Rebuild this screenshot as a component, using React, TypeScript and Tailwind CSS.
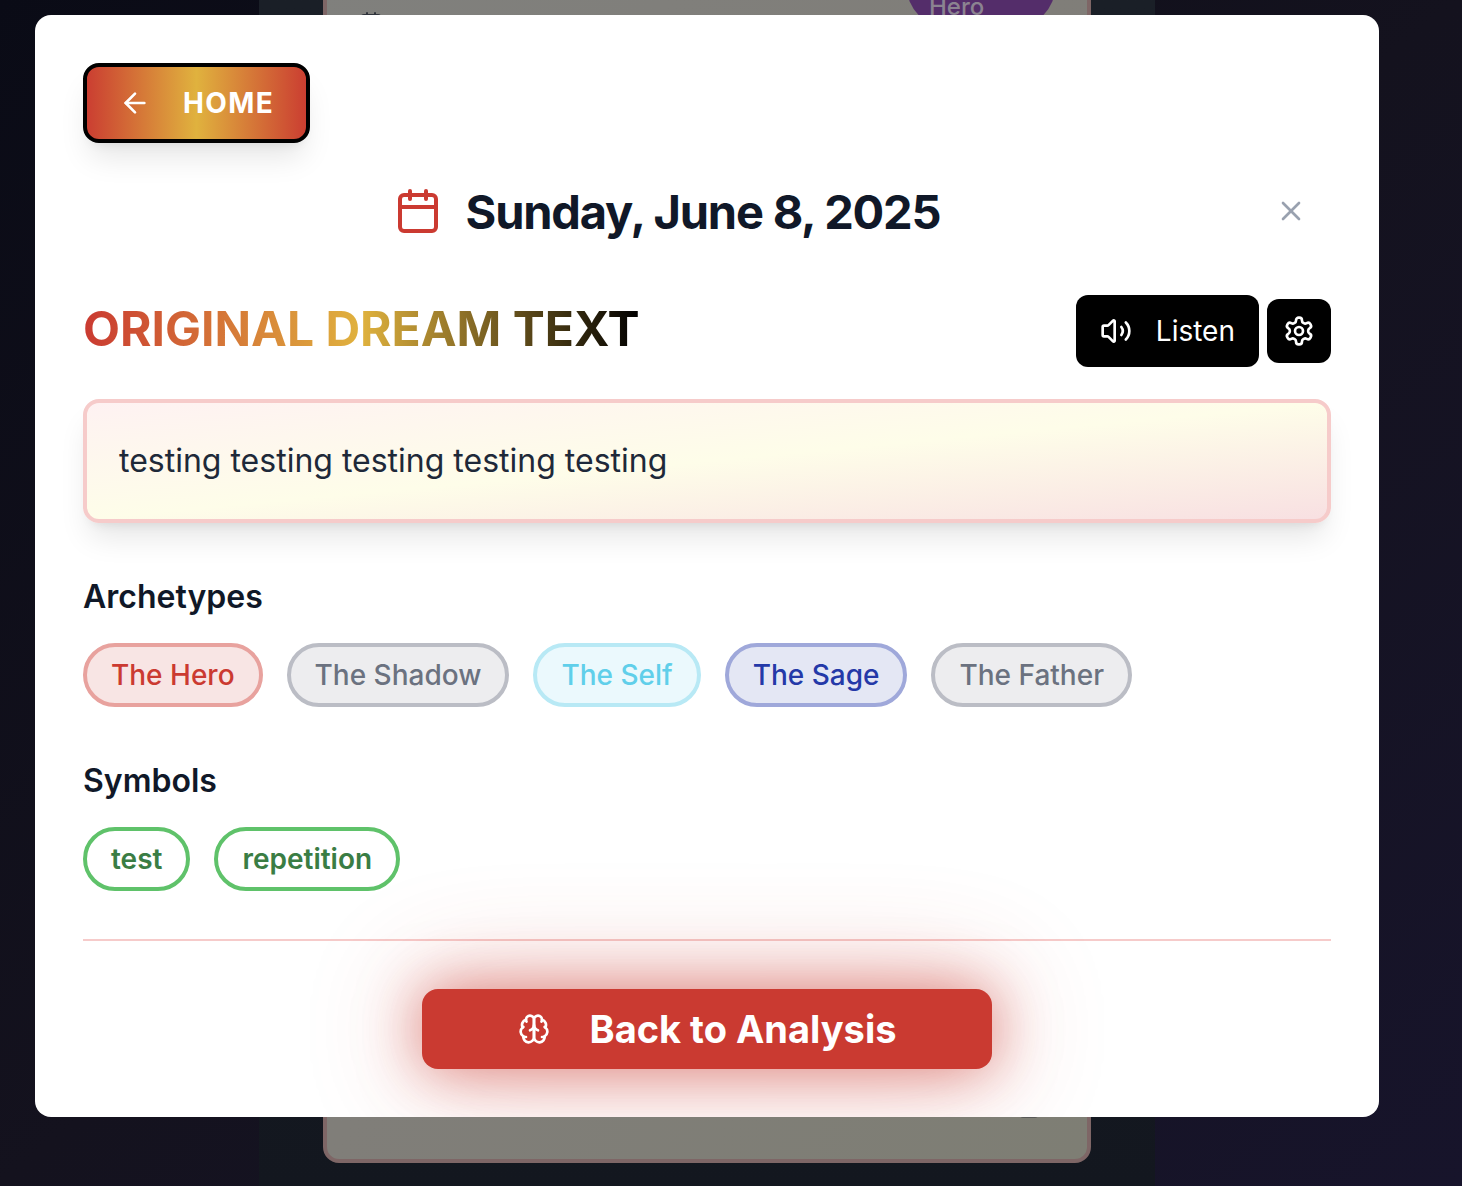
import React from "react";
import { ArrowLeft, Calendar, Trash2, Volume2, X } from "lucide-react";

const archetypes = [
  { name: "The Hero", style: "border-[#e8a29e] bg-[#f8e5e4] text-[#cb3a31]" },
  { name: "The Shadow", style: "border-[#bbbdc5] bg-[#ededef] text-[#6b7280]" },
  { name: "The Self", style: "border-[#b8e9f5] bg-[#ebf9fd] text-[#60cfea]" },
  { name: "The Sage", style: "border-[#9fa8da] bg-[#e4e7f4] text-[#2439a8]" },
  { name: "The Father", style: "border-[#bbbdc5] bg-[#ededef] text-[#6b7280]" },
];

const symbols = ["test", "repetition"];

function Icon({ children }: { children: React.ReactNode }) {
  return (
    <svg
      aria-hidden="true"
      width="32"
      height="32"
      viewBox="0 0 24 24"
      fill="none"
      stroke="currentColor"
      strokeWidth="2"
      strokeLinecap="round"
      strokeLinejoin="round"
    >
      {children}
    </svg>
  );
}

function BrainIcon() {
  return (
    <Icon>
      <path d="M12 5a3 3 0 1 0-5.997.125 4 4 0 0 0-2.526 5.77 4 4 0 0 0 .556 6.588A4 4 0 1 0 12 18Z" />
      <path d="M12 5a3 3 0 1 1 5.997.125 4 4 0 0 1 2.526 5.77 4 4 0 0 1-.556 6.588A4 4 0 1 1 12 18Z" />
      <path d="M15 13a4.5 4.5 0 0 1-3-4 4.5 4.5 0 0 1-3 4" />
      <path d="M17.599 6.5a3 3 0 0 0 .399-1.375" />
      <path d="M6.003 5.125A3 3 0 0 0 6.401 6.5" />
      <path d="M3.477 10.896a4 4 0 0 1 .585-.396" />
      <path d="M19.938 10.5a4 4 0 0 1 .585.396" />
      <path d="M6 18a4 4 0 0 1-1.967-.516" />
      <path d="M19.967 17.484A4 4 0 0 1 18 18" />
    </Icon>
  );
}

function GearIcon() {
  return (
    <Icon>
      <path d="M12.22 2h-.44a2 2 0 0 0-2 2v.18a2 2 0 0 1-1 1.73l-.43.25a2 2 0 0 1-2 0l-.15-.08a2 2 0 0 0-2.73.73l-.22.38a2 2 0 0 0 .73 2.73l.15.1a2 2 0 0 1 1 1.72v.51a2 2 0 0 1-1 1.74l-.15.09a2 2 0 0 0-.73 2.73l.22.38a2 2 0 0 0 2.73.73l.15-.08a2 2 0 0 1 2 0l.43.25a2 2 0 0 1 1 1.73V20a2 2 0 0 0 2 2h.44a2 2 0 0 0 2-2v-.18a2 2 0 0 1 1-1.73l.43-.25a2 2 0 0 1 2 0l.15.08a2 2 0 0 0 2.73-.73l.22-.39a2 2 0 0 0-.73-2.73l-.15-.08a2 2 0 0 1-1-1.74v-.5a2 2 0 0 1 1-1.74l.15-.09a2 2 0 0 0 .73-2.73l-.22-.38a2 2 0 0 0-2.73-.73l-.15.08a2 2 0 0 1-2 0l-.43-.25a2 2 0 0 1-1-1.73V4a2 2 0 0 0-2-2z" />
      <circle cx="12" cy="12" r="3" />
    </Icon>
  );
}

function Pill({ children, className }: { children: React.ReactNode; className: string }) {
  return (
    <li className={`flex h-16 items-center rounded-full border-4 px-6 text-[28px] leading-10 ${className}`}>
      {children}
    </li>
  );
}

function Backdrop() {
  return (
    <div aria-hidden="true" className="absolute inset-0 flex justify-center overflow-hidden bg-linear-to-br from-[#0a0b16] via-[#14121e] to-[#17142b] pr-12">
      <div className="flex w-full max-w-[896px] flex-col bg-linear-to-b from-[#1a1f27] to-[#13171f] px-16 pb-[23px]">
        <div className="-mt-16 flex flex-1 flex-col justify-between rounded-2xl border-4 border-[#7e6666] bg-linear-to-br from-[#80807d] via-[#807e79] to-[#7e7e74] px-8 pb-10">
          <div className="flex items-end justify-between">
            <Calendar size={24} className="-mb-2 text-[#30343c]" />
            <span className="flex h-[87px] w-[148px] items-end rounded-[40px] bg-[#542d6a] px-[22px] pb-1 text-2xl font-medium text-[#8b8390]">
              Hero
            </span>
          </div>
          <Trash2 size={28} className="mr-3 self-end text-[#4c4d4d]" />
        </div>
      </div>
    </div>
  );
}

export default function App() {
  return (
    <div className="relative min-h-screen bg-[#13121e] font-['Inter',sans-serif] text-gray-900">
      <Backdrop />
      <div className="relative flex justify-center pt-[15px] pr-12">
        <main role="dialog" aria-labelledby="dream-date" className="w-full max-w-[1344px] overflow-hidden rounded-2xl bg-white p-12">
          <button
            type="button"
            className="flex h-20 items-center gap-8 rounded-2xl border-4 border-black bg-linear-to-r/srgb from-[#ca3a31] via-[#e0b23e] to-[#ca3a31] bg-origin-border px-8 text-[28px] leading-10 font-bold tracking-wider text-white shadow-[0_20px_30px_-6px_rgba(0,0,0,0.1),0_8px_12px_-8px_rgba(0,0,0,0.1)]"
          >
            <ArrowLeft size={32} />
            HOME
          </button>

          <header className="mt-8 mb-12 flex h-[72px] items-center">
            <div className="flex flex-1 items-center justify-center gap-6">
              <Calendar size={48} className="text-[#cb3a31]" />
              <h1 id="dream-date" className="pt-0.5 text-[47px] leading-[48px] font-bold tracking-tight">
                Sunday, June 8, 2025
              </h1>
            </div>
            <button type="button" aria-label="Close" className="px-6 py-4 text-gray-400">
              <X size={32} />
            </button>
          </header>

          <section>
            <div className="mb-8 flex items-center justify-between">
              <h2 className="bg-linear-to-r/srgb from-[#ca3a31] via-[#e0b23e] to-black bg-clip-text pb-1 text-5xl font-bold text-transparent">
                ORIGINAL DREAM TEXT
              </h2>
              <div className="flex items-center gap-2">
                <button type="button" className="flex h-[72px] items-center gap-6 rounded-xl bg-black px-6 text-[28px] leading-10 text-white">
                  <Volume2 size={32} />
                  Listen
                </button>
                <button type="button" aria-label="Voice settings" className="flex size-16 items-center justify-center rounded-xl bg-black text-white">
                  <GearIcon />
                </button>
              </div>
            </div>
            <p className="rounded-2xl border-4 border-[#f6cbca] bg-linear-to-br/srgb from-[#fef2f2] via-[#fefde9] to-[#f8e0e2] p-8 text-[32px] leading-[52px] text-gray-800 shadow-[0_20px_30px_-6px_rgba(0,0,0,0.1),0_8px_12px_-8px_rgba(0,0,0,0.1)]">
              testing testing testing testing testing
            </p>
          </section>

          <section className="mt-12">
            <h3 className="mb-[22px] pt-0.5 text-[32px] leading-[48px] font-semibold">Archetypes</h3>
            <ul className="flex flex-wrap gap-6 font-medium">
              {archetypes.map((a) => (
                <Pill key={a.name} className={a.style}>{a.name}</Pill>
              ))}
            </ul>
          </section>

          <section className="mt-12">
            <h3 className="mb-[22px] pt-0.5 text-[32px] leading-[48px] font-semibold">Symbols</h3>
            <ul className="flex flex-wrap gap-6 font-semibold">
              {symbols.map((s) => (
                <Pill key={s} className="border-[#5fc26a] text-[#3a7d44]">{s}</Pill>
              ))}
            </ul>
          </section>

          <footer className="mt-12 flex justify-center border-t-2 border-[#f6cbca] pt-12">
            <button
              type="button"
              className="flex h-20 items-center gap-10 rounded-2xl bg-[#ca3a31] px-24 text-[38px] leading-[56px] font-bold text-white shadow-[0_0_60px_rgba(202,58,49,0.6),0_0_120px_rgba(202,58,49,0.3)]"
            >
              <BrainIcon />
              Back to Analysis
            </button>
          </footer>
        </main>
      </div>
    </div>
  );
}
